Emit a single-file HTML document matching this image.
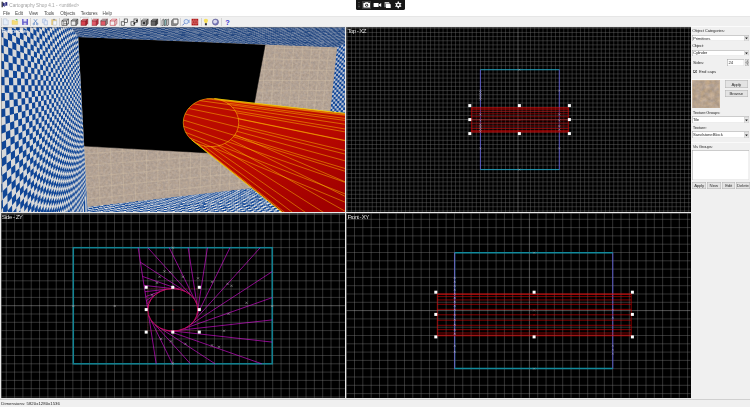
<!DOCTYPE html><html><head><meta charset="utf-8"><title>Cartography Shop 4.1 - &lt;untitled&gt;</title>
<style>
html,body{margin:0;padding:0}
body{width:750px;height:407px;overflow:hidden;background:#f0f0f0;position:relative;font-family:"Liberation Sans", sans-serif;font-size:4.3px;color:#000;line-height:1}
.a{position:absolute}
.t{position:absolute;white-space:nowrap;line-height:5px;height:5px}
.vp{position:absolute;overflow:hidden;background:#000}
.vp svg{position:absolute;left:0;top:0}
.vp:after{content:"";position:absolute;left:0;top:0;right:0;bottom:0;box-shadow:inset 0.55px 0.55px 0 0 #7a7a7a}
.lbl{position:absolute;left:1px;top:0.6px;color:#d8d8d8;font-size:4.3px;line-height:5px;white-space:nowrap}
.cb{position:absolute;background:#fff;box-shadow:inset 0.5px 0.5px 0 0 #9a9a9a,inset -0.4px -0.4px 0 0 #dcdcdc}
.cb i{position:absolute;right:0.4px;top:0.6px;bottom:0.5px;width:5.2px;background:#e6e6e6;box-shadow:inset 0 0 0 0.35px #c0c0c0}
.btn{position:absolute;background:#e3e3e3;box-shadow:inset 0 0 0 0.45px #b0b0b0;text-align:center;line-height:5px;white-space:nowrap}
.sep{position:absolute;width:0.5px;background:#d2d2d2;top:18.2px;height:7.4px}
</style></head><body>
<div class="a" style="left:0;top:0;width:750px;height:16.4px;background:#fff"></div>
<div class="a" style="left:0;top:16.4px;width:750px;height:0.6px;background:#e6e6e6"></div>
<svg class="a" style="left:1px;top:1px" width="7" height="7" viewBox="0 0 7 7"><path d="M0.6 0.8h1.2v5.4h-1.2z" fill="#222"/><path d="M1.8 0.9l1.5 1.6 1.5-1.6 1.5 0.3v3.6l-1.5-0.3-1.5 1.2-1.5-1.2z" fill="#2a2a7a"/><path d="M3.3 2.5l1.5-1.6v3.6l-1.5 1.2z" fill="#8080b8"/></svg>
<div class="a" style="left:355.8px;top:-2px;width:49px;height:11.8px;background:#161616;border-radius:1.6px"></div>
<div class="a" style="left:362px;top:0.6px;width:9.4px;height:8.4px;background:#3a3a3a"></div>
<svg class="a" style="left:355.8px;top:0" width="49" height="10" viewBox="0 0 49 10"><g fill="#fff"><rect x="2.6" y="2.2" width="0.7" height="0.7" fill="#bbb"/><rect x="2.6" y="4.6" width="0.7" height="0.7" fill="#999"/><rect x="2.4" y="6.4" width="1.2" height="0.8" fill="#999"/><path d="M7.4 3.1h1.5l0.6-0.9h2.4l0.6 0.9h1.5v4.5h-6.6z"/><circle cx="10.7" cy="5.2" r="1.45" fill="#161616"/><circle cx="10.7" cy="5.2" r="0.8"/><rect x="17.6" y="2.9" width="5" height="4.2" rx="0.5"/><path d="M22.9 4.6l2.3-1.5v3.9l-2.3-1.5z"/><path d="M28.6 2.1h4.6v1.2h-3.6v4h-1z" fill="#ccc"/><path d="M30 3.4h3.6l1.1 1.1v3.6h-4.7z"/><circle cx="42.3" cy="4.9" r="2.3"/><g stroke="#fff" stroke-width="1.3"><path d="M42.3 1.6v6.6M39.44 3.25l5.72 3.3M39.44 6.55l5.72-3.3"/></g><circle cx="42.3" cy="4.9" r="1.15" fill="#161616"/></g></svg>
<svg class="a" style="left:0;top:0" width="240" height="27" viewBox="0 0 240 27"><rect x="80.2" y="17.6" width="8.6" height="8.4" fill="#fafafa" stroke="#c4c4c4" stroke-width="0.4"/><path d="M3.3 18.9h3.2l1.7 1.7v4.3h-4.9z" fill="#e6eef9" stroke="#a4b4cc" stroke-width="0.45"/><path d="M6.5 18.9v1.7h1.7" fill="#fff" stroke="#a4b4cc" stroke-width="0.35"/><path d="M12 20.3h2.2l0.6 0.7h2.8v3.6h-5.6z" fill="#f5dc78" stroke="#d8bc58" stroke-width="0.35"/><path d="M15.3 19.4c1-0.8 2.2-0.4 2.6 0.8l-1.2 0.3z" fill="#6cbc5c"/><path d="M22.1 19h5.9v5.9h-5.9z" fill="#6660cc"/><rect x="23.5" y="19" width="3.1" height="2.5" fill="#e4e4f6"/><rect x="23.7" y="22.8" width="2.7" height="2.1" fill="#cfcfee"/><g stroke="#4a78c0" stroke-width="0.65" fill="none"><path d="M33.8 19.1l3.2 4.1M37.2 19.1l-3.2 4.1"/><circle cx="33.8" cy="24" r="0.85"/><circle cx="37.2" cy="24" r="0.85"/></g><g fill="#e4ecf8" stroke="#7c98cc" stroke-width="0.4"><path d="M42.6 19h3v3.9h-3z"/><path d="M44.2 20.7h3.2v4.2h-3.2z"/></g><path d="M51.6 19.6h4.8v5.3h-4.8z" fill="#ecd07c" stroke="#c4a45c" stroke-width="0.35"/><path d="M53.1 20.9h3.6v4.1h-3.6z" fill="#f4f6fc" stroke="#92a8cc" stroke-width="0.35"/><rect x="52.9" y="18.9" width="2.2" height="1.1" fill="#999"/><g transform="translate(61.9,19)" stroke="#222" stroke-width="0.55" stroke-linejoin="round"><path d="M0 1.8h4.8v4.6h-4.8z" fill="#f4f4f4"/><path d="M0 1.8l1.8-1.6h4.8l-1.8 1.6z" fill="#fdfdfd"/><path d="M4.8 1.8l1.8-1.6v4.6l-1.8 1.6z" fill="#e8e8e8"/></g><path d="M63.7 20.8v4.6M63.7 23.6h4.6" stroke="#222" stroke-width="0.4" fill="none"/><g transform="translate(71.2,19)" stroke="#333" stroke-width="0.55" stroke-linejoin="round"><path d="M0 1.8h4.8v4.6h-4.8z" fill="#ededed"/><path d="M0 1.8l1.8-1.6h4.8l-1.8 1.6z" fill="#cfcfcf"/><path d="M4.8 1.8l1.8-1.6v4.6l-1.8 1.6z" fill="#8c8c8c"/></g><g transform="translate(81.1,19)" stroke="#7a1820" stroke-width="0.55" stroke-linejoin="round"><path d="M0 1.8h4.8v4.6h-4.8z" fill="#d8424e"/><path d="M0 1.8l1.8-1.6h4.8l-1.8 1.6z" fill="#e8808a"/><path d="M4.8 1.8l1.8-1.6v4.6l-1.8 1.6z" fill="#a82030"/></g><g transform="translate(91.6,19)" stroke="#8a2028" stroke-width="0.55" stroke-linejoin="round"><path d="M0 1.8h4.8v4.6h-4.8z" fill="#e05a68"/><path d="M0 1.8l1.8-1.6h4.8l-1.8 1.6z" fill="#f09aa2"/><path d="M4.8 1.8l1.8-1.6v4.6l-1.8 1.6z" fill="#b83040"/></g><g transform="translate(100.8,19)" stroke="#6a3a40" stroke-width="0.55" stroke-linejoin="round"><path d="M0 1.8h4.8v4.6h-4.8z" fill="#e05a68"/><path d="M0 1.8l1.8-1.6h4.8l-1.8 1.6z" fill="#bcbcbc"/><path d="M4.8 1.8l1.8-1.6v4.6l-1.8 1.6z" fill="#8a8a8a"/></g><g transform="translate(110.2,19)" stroke="#c0303c" stroke-width="0.55" stroke-linejoin="round"><path d="M0 1.8h4.8v4.6h-4.8z" fill="#f2f2f2"/><path d="M0 1.8l1.8-1.6h4.8l-1.8 1.6z" fill="#fafafa"/><path d="M4.8 1.8l1.8-1.6v4.6l-1.8 1.6z" fill="#e0e0e0"/></g><g stroke="#222" stroke-width="0.6" fill="#f4f4f4"><rect x="121.2" y="21.8" width="3.4" height="3.4"/><rect x="124.2" y="19" width="3.4" height="3.4"/></g><g stroke="#222" stroke-width="0.6" fill="#f4f4f4"><rect x="131" y="21.8" width="3.4" height="3.4"/><rect x="134" y="19" width="3.4" height="3.4"/></g><rect x="133.4" y="22.6" width="1.8" height="1.8" fill="#222"/><rect x="135.8" y="19.8" width="1.8" height="1.8" fill="#222"/><g transform="translate(141.5,19)" stroke="#222" stroke-width="0.55" stroke-linejoin="round"><path d="M0 1.8h4.8v4.6h-4.8z" fill="#d8d8d8"/><path d="M0 1.8l1.8-1.6h4.8l-1.8 1.6z" fill="#f0f0f0"/><path d="M4.8 1.8l1.8-1.6v4.6l-1.8 1.6z" fill="#777"/></g><rect x="142.6" y="21.8" width="2.6" height="2.6" fill="#333"/><g transform="translate(151.1,19)" stroke="#222" stroke-width="0.55" stroke-linejoin="round"><path d="M0 1.8h4.8v4.6h-4.8z" fill="#666"/><path d="M0 1.8l1.8-1.6h4.8l-1.8 1.6z" fill="#999"/><path d="M4.8 1.8l1.8-1.6v4.6l-1.8 1.6z" fill="#444"/></g><g stroke="#222" stroke-width="0.5"><path d="M162 20.2l1.8-1.2v5.8l-1.8 1.2z" fill="#eee"/><path d="M164.4 20.2l1.8-1.2v5.8l-1.8 1.2z" fill="#9cc"/><path d="M166.8 20.2l1.8-1.2v5.8l-1.8 1.2z" fill="#ddd"/></g><g stroke="#333" stroke-width="0.5"><path d="M171.6 20.6l1.8-1.6h4.6v4.8l-1.8 1.6h-4.6z" fill="#999"/><path d="M173.2 19.2h4.6v4.6h-4.6z" fill="#f4f4f4"/></g><g><circle cx="186.2" cy="21.6" r="2.2" fill="#dce8f8" stroke="#6a8ccc" stroke-width="0.7"/><path d="M184.4 23.4l-2 2" stroke="#4a6cc0" stroke-width="0.9"/><path d="M188 20.2l1.6-0.8v3.6l-1.6-0.6z" fill="#8aa8dc"/></g><rect x="191.6" y="18.8" width="6.6" height="6.6" fill="#b01818"/><path d="M191.6 21h6.6M191.6 23.2h6.6M193.8 18.8v2.2M196 18.8v2.2M192.7 21v2.2M194.9 21v2.2M197.1 21v2.2M193.8 23.2v2.2M196 23.2v2.2" stroke="#f0b0b0" stroke-width="0.4"/><path d="M205.9 18.7c1.5 0 2.1 1 2.1 1.9 0 1-0.9 1.5-1 2.4h-2.2c-0.1-0.9-1-1.4-1-2.4 0-0.9 0.6-1.9 2.1-1.9z" fill="#f6de5a"/><rect x="204.9" y="23.2" width="2" height="2.1" fill="#333"/><circle cx="215.5" cy="22.1" r="3.1" fill="#7a7ab8"/><path d="M213.2 20.6c1.2-1.4 3-1 3.8 0.2s-0.4 2.2-1.6 2.6-2.6 0-2.2-2.8z" fill="#d8d8ec"/><circle cx="215.5" cy="22.1" r="3.1" fill="none" stroke="#55558a" stroke-width="0.5"/><text x="225.2" y="25" font-family='"Liberation Sans", sans-serif' font-size="7.4" font-weight="bold" fill="#3a3ad0">?</text></svg>
<div class="sep" style="left:0.6px"></div>
<div class="sep" style="left:30.2px"></div>
<div class="sep" style="left:59.2px"></div>
<div class="sep" style="left:90.7px"></div>
<div class="sep" style="left:119.1px"></div>
<div class="sep" style="left:139.7px"></div>
<div class="sep" style="left:159.8px"></div>
<div class="sep" style="left:180.3px"></div>
<div class="sep" style="left:200.6px"></div>
<div class="sep" style="left:221px"></div>
<div class="a" style="left:0;top:26.4px;width:691.4px;height:372.4px;background:#e9e9e9"></div>
<div class="vp" style="left:346.2px;top:26.9px;width:344.6px;height:185px;"><svg width="344.6" height="185" viewBox="346.2 26.9 344.6 185"><g transform="translate(346.2,26.9)"><path d="M1.28 0V185M5.44 0V185M9.6 0V185M13.77 0V185M17.93 0V185M22.1 0V185M26.26 0V185M30.42 0V185M34.59 0V185M38.75 0V185M42.92 0V185M47.08 0V185M51.24 0V185M55.41 0V185M59.57 0V185M63.74 0V185M67.9 0V185M72.06 0V185M76.23 0V185M80.39 0V185M84.56 0V185M88.72 0V185M92.88 0V185M97.05 0V185M101.21 0V185M105.38 0V185M109.54 0V185M113.7 0V185M117.87 0V185M122.03 0V185M126.2 0V185M130.36 0V185M134.52 0V185M138.69 0V185M142.85 0V185M147.02 0V185M151.18 0V185M155.34 0V185M159.51 0V185M163.67 0V185M167.84 0V185M176.16 0V185M180.33 0V185M184.49 0V185M188.66 0V185M192.82 0V185M196.98 0V185M201.15 0V185M205.31 0V185M209.48 0V185M213.64 0V185M217.8 0V185M221.97 0V185M226.13 0V185M230.3 0V185M234.46 0V185M238.62 0V185M242.79 0V185M246.95 0V185M251.12 0V185M255.28 0V185M259.44 0V185M263.61 0V185M267.77 0V185M271.94 0V185M276.1 0V185M280.26 0V185M284.43 0V185M288.59 0V185M292.76 0V185M296.92 0V185M301.08 0V185M305.25 0V185M309.41 0V185M313.58 0V185M317.74 0V185M321.9 0V185M326.07 0V185M330.23 0V185M334.4 0V185M338.56 0V185M342.72 0V185M0 1.3H344.6M0 5.45H344.6M0 9.6H344.6M0 13.75H344.6M0 17.9H344.6M0 22.05H344.6M0 26.2H344.6M0 30.35H344.6M0 34.5H344.6M0 38.65H344.6M0 42.8H344.6M0 46.95H344.6M0 51.1H344.6M0 55.25H344.6M0 59.4H344.6M0 63.55H344.6M0 67.7H344.6M0 71.85H344.6M0 76H344.6M0 80.15H344.6M0 84.3H344.6M0 88.45H344.6M0 96.75H344.6M0 100.9H344.6M0 105.05H344.6M0 109.2H344.6M0 113.35H344.6M0 117.5H344.6M0 121.65H344.6M0 125.8H344.6M0 129.95H344.6M0 134.1H344.6M0 138.25H344.6M0 142.4H344.6M0 146.55H344.6M0 150.7H344.6M0 154.85H344.6M0 159H344.6M0 163.15H344.6M0 167.3H344.6M0 171.45H344.6M0 175.6H344.6M0 179.75H344.6M0 183.9H344.6" stroke="#6c6c6c" stroke-width="0.42" fill="none"/></g><path d="M518.2 26.9V211.9M346.2 119.5H690.8" stroke="#a4a4a4" stroke-width="0.5" fill="none"/><path d="M480.6 69.6V169.5M559.5 69.6V169.5" stroke="#6464e6" stroke-width="0.8" fill="none"/><path d="M480.6 69.6H559.5M480.6 169.5H559.5" stroke="#1cb4d4" stroke-width="0.8" fill="none"/><rect x="471.6" y="107.6" width="97.2" height="24.4" fill="#380000" fill-opacity="0.25"/><path d="M471.6 107.6H568.8M471.6 108.02H568.8M471.6 109.23H568.8M471.6 111.17H568.8M471.6 113.7H568.8M471.6 116.64H568.8M471.6 119.8H568.8M471.6 122.96H568.8M471.6 125.9H568.8M471.6 128.43H568.8M471.6 130.37H568.8M471.6 131.58H568.8M471.6 132H568.8M471.6 107.6V132M568.8 107.6V132" stroke="#ee0000" stroke-width="0.5" fill="none"/><path d="M479.6 89.5l2 2M481.6 89.5l-2 2" stroke="#b8b8b8" stroke-width="0.42" fill="none"/><path d="M479.6 91.3l2 2M481.6 91.3l-2 2" stroke="#b8b8b8" stroke-width="0.42" fill="none"/><path d="M479.6 93.2l2 2M481.6 93.2l-2 2" stroke="#b8b8b8" stroke-width="0.42" fill="none"/><path d="M479.6 95l2 2M481.6 95l-2 2" stroke="#b8b8b8" stroke-width="0.42" fill="none"/><path d="M479.6 96.8l2 2M481.6 96.8l-2 2" stroke="#b8b8b8" stroke-width="0.42" fill="none"/><path d="M479.6 98.4l2 2M481.6 98.4l-2 2" stroke="#b8b8b8" stroke-width="0.42" fill="none"/><path d="M479.6 113.3l2 2M481.6 113.3l-2 2" stroke="#b8b8b8" stroke-width="0.42" fill="none"/><path d="M479.6 119.2l2 2M481.6 119.2l-2 2" stroke="#b8b8b8" stroke-width="0.42" fill="none"/><path d="M479.6 123.2l2 2M481.6 123.2l-2 2" stroke="#b8b8b8" stroke-width="0.42" fill="none"/><path d="M479.6 125l2 2M481.6 125l-2 2" stroke="#b8b8b8" stroke-width="0.42" fill="none"/><path d="M479.6 126.8l2 2M481.6 126.8l-2 2" stroke="#b8b8b8" stroke-width="0.42" fill="none"/><path d="M479.6 128.6l2 2M481.6 128.6l-2 2" stroke="#b8b8b8" stroke-width="0.42" fill="none"/><path d="M479.6 130.4l2 2M481.6 130.4l-2 2" stroke="#b8b8b8" stroke-width="0.42" fill="none"/><path d="M479.6 147.3l2 2M481.6 147.3l-2 2" stroke="#b8b8b8" stroke-width="0.42" fill="none"/><path d="M558.5 89.5l2 2M560.5 89.5l-2 2" stroke="#b8b8b8" stroke-width="0.42" fill="none"/><path d="M558.5 113.3l2 2M560.5 113.3l-2 2" stroke="#b8b8b8" stroke-width="0.42" fill="none"/><path d="M558.5 119.2l2 2M560.5 119.2l-2 2" stroke="#b8b8b8" stroke-width="0.42" fill="none"/><path d="M558.5 125l2 2M560.5 125l-2 2" stroke="#b8b8b8" stroke-width="0.42" fill="none"/><path d="M558.5 128.6l2 2M560.5 128.6l-2 2" stroke="#b8b8b8" stroke-width="0.42" fill="none"/><path d="M558.5 147.3l2 2M560.5 147.3l-2 2" stroke="#b8b8b8" stroke-width="0.42" fill="none"/><path d="M518.6 68.6l2 2M520.6 68.6l-2 2" stroke="#b8b8b8" stroke-width="0.42" fill="none"/><path d="M518.6 168.5l2 2M520.6 168.5l-2 2" stroke="#b8b8b8" stroke-width="0.42" fill="none"/><path d="M518.6 118.8l2 2M520.6 118.8l-2 2" stroke="#d02020" stroke-width="0.42" fill="none"/><rect x="468.5" y="104" width="3" height="3" fill="#fff"/><rect x="468.5" y="118" width="3" height="3" fill="#fff"/><rect x="468.5" y="132" width="3" height="3" fill="#fff"/><rect x="518.1" y="104" width="3" height="3" fill="#fff"/><rect x="518.1" y="132" width="3" height="3" fill="#fff"/><rect x="568.1" y="104" width="3" height="3" fill="#fff"/><rect x="568.1" y="118" width="3" height="3" fill="#fff"/><rect x="568.1" y="132" width="3" height="3" fill="#fff"/></svg></div>
<div class="vp" style="left:346.2px;top:213.2px;width:344.6px;height:184.8px;"><svg width="344.6" height="184.8" viewBox="346.2 213.2 344.6 184.8"><g transform="translate(346.2,213.2)"><path d="M0.18 0V184.8M8.51 0V184.8M16.84 0V184.8M25.17 0V184.8M33.5 0V184.8M41.82 0V184.8M50.15 0V184.8M58.48 0V184.8M66.81 0V184.8M75.14 0V184.8M83.46 0V184.8M91.79 0V184.8M100.12 0V184.8M108.45 0V184.8M116.78 0V184.8M125.1 0V184.8M133.43 0V184.8M141.76 0V184.8M150.09 0V184.8M158.42 0V184.8M166.74 0V184.8M175.07 0V184.8M191.73 0V184.8M200.06 0V184.8M208.38 0V184.8M216.71 0V184.8M225.04 0V184.8M233.37 0V184.8M241.7 0V184.8M250.02 0V184.8M258.35 0V184.8M266.68 0V184.8M275.01 0V184.8M283.34 0V184.8M291.66 0V184.8M299.99 0V184.8M308.32 0V184.8M316.65 0V184.8M324.98 0V184.8M333.3 0V184.8M341.63 0V184.8M0 6.3H344.6M0 14.6H344.6M0 22.9H344.6M0 31.2H344.6M0 39.5H344.6M0 47.8H344.6M0 56.1H344.6M0 64.4H344.6M0 72.7H344.6M0 81H344.6M0 89.3H344.6M0 105.9H344.6M0 114.2H344.6M0 122.5H344.6M0 130.8H344.6M0 139.1H344.6M0 147.4H344.6M0 155.7H344.6M0 164H344.6M0 172.3H344.6M0 180.6H344.6" stroke="#787878" stroke-width="0.42" fill="none"/></g><path d="M529.6 213.2V398M346.2 310.8H690.8" stroke="#a4a4a4" stroke-width="0.5" fill="none"/><path d="M454.9 252.9V368.8M613 252.9V368.8" stroke="#6262dc" stroke-width="0.9" fill="none"/><path d="M454.9 252.9V368.8" stroke="#128a9c" stroke-width="1.0" fill="none"/><path d="M454.7 252.9V368.8" stroke="#c040d0" stroke-width="0.45" fill="none"/><path d="M454.9 252.9H613M454.9 368.8H613" stroke="#128a9c" stroke-width="1.5" fill="none"/><path d="M437.5 294H631.4M437.5 294.72H631.4M437.5 296.81H631.4M437.5 300.15H631.4M437.5 304.5H631.4M437.5 309.56H631.4M437.5 315H631.4M437.5 320.44H631.4M437.5 325.5H631.4M437.5 329.85H631.4M437.5 333.19H631.4M437.5 335.28H631.4M437.5 336H631.4M437.5 294V336M631.4 294V336" stroke="#ee0000" stroke-width="0.55" fill="none"/><path d="M454 277.1l1.8 1.8M455.8 277.1l-1.8 1.8" stroke="#d0c8e8" stroke-width="0.42" fill="none"/><path d="M454 281.1l1.8 1.8M455.8 281.1l-1.8 1.8" stroke="#d0c8e8" stroke-width="0.42" fill="none"/><path d="M454 285.1l1.8 1.8M455.8 285.1l-1.8 1.8" stroke="#d0c8e8" stroke-width="0.42" fill="none"/><path d="M454 289.1l1.8 1.8M455.8 289.1l-1.8 1.8" stroke="#d0c8e8" stroke-width="0.42" fill="none"/><path d="M454 293.1l1.8 1.8M455.8 293.1l-1.8 1.8" stroke="#d0c8e8" stroke-width="0.42" fill="none"/><path d="M454 297.1l1.8 1.8M455.8 297.1l-1.8 1.8" stroke="#d0c8e8" stroke-width="0.42" fill="none"/><path d="M454 301.1l1.8 1.8M455.8 301.1l-1.8 1.8" stroke="#d0c8e8" stroke-width="0.42" fill="none"/><path d="M454 305.1l1.8 1.8M455.8 305.1l-1.8 1.8" stroke="#d0c8e8" stroke-width="0.42" fill="none"/><path d="M454 309.1l1.8 1.8M455.8 309.1l-1.8 1.8" stroke="#d0c8e8" stroke-width="0.42" fill="none"/><path d="M454 314.1l1.8 1.8M455.8 314.1l-1.8 1.8" stroke="#d0c8e8" stroke-width="0.42" fill="none"/><path d="M454 319.1l1.8 1.8M455.8 319.1l-1.8 1.8" stroke="#d0c8e8" stroke-width="0.42" fill="none"/><path d="M454 324.1l1.8 1.8M455.8 324.1l-1.8 1.8" stroke="#d0c8e8" stroke-width="0.42" fill="none"/><path d="M454 329.1l1.8 1.8M455.8 329.1l-1.8 1.8" stroke="#d0c8e8" stroke-width="0.42" fill="none"/><path d="M454 333.1l1.8 1.8M455.8 333.1l-1.8 1.8" stroke="#d0c8e8" stroke-width="0.42" fill="none"/><path d="M454 345.1l1.8 1.8M455.8 345.1l-1.8 1.8" stroke="#d0c8e8" stroke-width="0.42" fill="none"/><path d="M454 351.1l1.8 1.8M455.8 351.1l-1.8 1.8" stroke="#d0c8e8" stroke-width="0.42" fill="none"/><path d="M612.2 309.2l1.6 1.6M613.8 309.2l-1.6 1.6" stroke="#a8a0c8" stroke-width="0.42" fill="none"/><path d="M612.2 317.2l1.6 1.6M613.8 317.2l-1.6 1.6" stroke="#a8a0c8" stroke-width="0.42" fill="none"/><path d="M612.2 345.2l1.6 1.6M613.8 345.2l-1.6 1.6" stroke="#a8a0c8" stroke-width="0.42" fill="none"/><path d="M612.2 349.2l1.6 1.6M613.8 349.2l-1.6 1.6" stroke="#a8a0c8" stroke-width="0.42" fill="none"/><path d="M612.2 353.2l1.6 1.6M613.8 353.2l-1.6 1.6" stroke="#a8a0c8" stroke-width="0.42" fill="none"/><path d="M533.3 251.9l2 2M535.3 251.9l-2 2" stroke="#b8b8b8" stroke-width="0.42" fill="none"/><path d="M533.3 367.8l2 2M535.3 367.8l-2 2" stroke="#b8b8b8" stroke-width="0.42" fill="none"/><path d="M533.3 314l2 2M535.3 314l-2 2" stroke="#d02020" stroke-width="0.42" fill="none"/><path d="M533.3 309.6l2 2M535.3 309.6l-2 2" stroke="#888" stroke-width="0.42" fill="none"/><rect x="434.5" y="290.9" width="3" height="3" fill="#fff"/><rect x="434.5" y="313.1" width="3" height="3" fill="#fff"/><rect x="434.5" y="335.6" width="3" height="3" fill="#fff"/><rect x="532.8" y="290.9" width="3" height="3" fill="#fff"/><rect x="532.8" y="335.6" width="3" height="3" fill="#fff"/><rect x="631.1" y="290.9" width="3" height="3" fill="#fff"/><rect x="631.1" y="313.1" width="3" height="3" fill="#fff"/><rect x="631.1" y="335.6" width="3" height="3" fill="#fff"/></svg></div>
<div class="vp" style="left:1px;top:213.2px;width:343.9px;height:184.8px;"><svg width="343.9" height="184.8" viewBox="1 213.2 343.9 184.8"><g transform="translate(1,213.2)"><path d="M5.24 0V184.8M13.57 0V184.8M21.9 0V184.8M30.22 0V184.8M38.55 0V184.8M46.88 0V184.8M55.21 0V184.8M63.54 0V184.8M71.86 0V184.8M80.19 0V184.8M88.52 0V184.8M96.85 0V184.8M105.18 0V184.8M113.5 0V184.8M121.83 0V184.8M130.16 0V184.8M138.49 0V184.8M146.82 0V184.8M155.14 0V184.8M163.47 0V184.8M180.13 0V184.8M188.46 0V184.8M196.78 0V184.8M205.11 0V184.8M213.44 0V184.8M221.77 0V184.8M230.1 0V184.8M238.42 0V184.8M246.75 0V184.8M255.08 0V184.8M263.41 0V184.8M271.74 0V184.8M280.06 0V184.8M288.39 0V184.8M296.72 0V184.8M305.05 0V184.8M313.38 0V184.8M321.7 0V184.8M330.03 0V184.8M338.36 0V184.8M0 1.4H343.9M0 9.7H343.9M0 18H343.9M0 26.3H343.9M0 34.6H343.9M0 42.9H343.9M0 51.2H343.9M0 59.5H343.9M0 67.8H343.9M0 76.1H343.9M0 84.4H343.9M0 101H343.9M0 109.3H343.9M0 117.6H343.9M0 125.9H343.9M0 134.2H343.9M0 142.5H343.9M0 150.8H343.9M0 159.1H343.9M0 167.4H343.9M0 175.7H343.9M0 184H343.9" stroke="#787878" stroke-width="0.42" fill="none"/></g><path d="M172.8 213.2V398M1 305.9H344.9" stroke="#a4a4a4" stroke-width="0.5" fill="none"/><rect x="73.3" y="247.9" width="198.9" height="116.1" fill="none" stroke="#128494" stroke-width="1.5"/><path d="M138.16 247.9L156.18 364M148.65 315.49L172.35 364M151.15 320.6L190.42 364M155.12 324.99L215.07 364M160.3 328.36L261.77 364M166.33 330.48L272.2 342.3M172.8 331.2L272.2 320.1M179.27 330.48L272.2 297.84M185.3 328.36L272.2 271.81M190.48 324.99L260.23 247.9M194.45 320.6L229.96 247.9M196.95 315.49L207.44 247.9M197.8 310L188.16 247.9M196.95 304.51L169.29 247.9M194.45 299.4L147.85 247.9M190.48 295.01L140.42 262.43M185.3 291.64L142.62 276.65M179.27 289.52L144.01 285.59M172.8 288.8L144.99 291.9M166.33 289.52L145.74 296.75M160.3 291.64L146.36 300.71M155.12 295.01L146.89 304.11M151.15 299.4L147.36 307.16M148.65 304.51L147.8 310" stroke="#f010f0" stroke-width="0.58" fill="none"/><path d="M147.8 310L148.65 315.49L151.15 320.6L155.12 324.99L160.3 328.36L166.33 330.48L172.8 331.2L179.27 330.48L185.3 328.36L190.48 324.99L194.45 320.6L196.95 315.49L197.8 310L196.95 304.51L194.45 299.4L190.48 295.01L185.3 291.64L179.27 289.52L172.8 288.8L166.33 289.52L160.3 291.64L155.12 295.01L151.15 299.4L148.65 304.51Z" stroke="#e01010" stroke-width="0.5" fill="none"/><rect x="147.8" y="288.8" width="50" height="42.4" fill="none" stroke="#a01010" stroke-width="0.4" stroke-dasharray="0.8 0.8"/><path d="M172.1 309.3l1.4 1.4M173.5 309.3l-1.4 1.4" stroke="#d02020" stroke-width="0.42" fill="none"/><path d="M72.2 305.1l2.2 2.2M74.4 305.1l-2.2 2.2" stroke="#b8b8b8" stroke-width="0.5" fill="none"/><path d="M113.6 305.1l2.2 2.2M115.8 305.1l-2.2 2.2" stroke="#b8b8b8" stroke-width="0.5" fill="none"/><path d="M271.1 305.1l2.2 2.2M273.3 305.1l-2.2 2.2" stroke="#b8b8b8" stroke-width="0.5" fill="none"/><path d="M171.7 246.8l2.2 2.2M173.9 246.8l-2.2 2.2" stroke="#b8b8b8" stroke-width="0.5" fill="none"/><path d="M171.7 362.5l2.2 2.2M173.9 362.5l-2.2 2.2" stroke="#b8b8b8" stroke-width="0.5" fill="none"/><path d="M163.4 270.4l2.2 2.2M165.6 270.4l-2.2 2.2" stroke="#b8b8b8" stroke-width="0.5" fill="none"/><path d="M169.2 271.4l2.2 2.2M171.4 271.4l-2.2 2.2" stroke="#b8b8b8" stroke-width="0.5" fill="none"/><path d="M158.4 275.9l2.2 2.2M160.6 275.9l-2.2 2.2" stroke="#b8b8b8" stroke-width="0.5" fill="none"/><path d="M181.9 275.9l2.2 2.2M184.1 275.9l-2.2 2.2" stroke="#b8b8b8" stroke-width="0.5" fill="none"/><path d="M196.9 277.4l2.2 2.2M199.1 277.4l-2.2 2.2" stroke="#b8b8b8" stroke-width="0.5" fill="none"/><path d="M226.4 282.9l2.2 2.2M228.6 282.9l-2.2 2.2" stroke="#b8b8b8" stroke-width="0.5" fill="none"/><path d="M230.4 284.9l2.2 2.2M232.6 284.9l-2.2 2.2" stroke="#b8b8b8" stroke-width="0.5" fill="none"/><path d="M155.9 281.9l2.2 2.2M158.1 281.9l-2.2 2.2" stroke="#b8b8b8" stroke-width="0.5" fill="none"/><path d="M150.9 293.9l2.2 2.2M153.1 293.9l-2.2 2.2" stroke="#b8b8b8" stroke-width="0.5" fill="none"/><path d="M210.9 280.9l2.2 2.2M213.1 280.9l-2.2 2.2" stroke="#b8b8b8" stroke-width="0.5" fill="none"/><path d="M245.4 301.9l2.2 2.2M247.6 301.9l-2.2 2.2" stroke="#b8b8b8" stroke-width="0.5" fill="none"/><path d="M227.4 312.9l2.2 2.2M229.6 312.9l-2.2 2.2" stroke="#b8b8b8" stroke-width="0.5" fill="none"/><path d="M222.9 329.9l2.2 2.2M225.1 329.9l-2.2 2.2" stroke="#b8b8b8" stroke-width="0.5" fill="none"/><path d="M210.9 344.4l2.2 2.2M213.1 344.4l-2.2 2.2" stroke="#b8b8b8" stroke-width="0.5" fill="none"/><path d="M217.9 345.9l2.2 2.2M220.1 345.9l-2.2 2.2" stroke="#b8b8b8" stroke-width="0.5" fill="none"/><path d="M184.4 342.9l2.2 2.2M186.6 342.9l-2.2 2.2" stroke="#b8b8b8" stroke-width="0.5" fill="none"/><path d="M169.9 340.4l2.2 2.2M172.1 340.4l-2.2 2.2" stroke="#b8b8b8" stroke-width="0.5" fill="none"/><path d="M159.9 337.9l2.2 2.2M162.1 337.9l-2.2 2.2" stroke="#b8b8b8" stroke-width="0.5" fill="none"/><rect x="144.7" y="286" width="3" height="3" fill="#fff"/><rect x="144.7" y="308.3" width="3" height="3" fill="#fff"/><rect x="144.7" y="330.8" width="3" height="3" fill="#fff"/><rect x="171.3" y="286" width="3" height="3" fill="#fff"/><rect x="171.3" y="330.8" width="3" height="3" fill="#fff"/><rect x="197.8" y="286" width="3" height="3" fill="#fff"/><rect x="197.8" y="308.3" width="3" height="3" fill="#fff"/><rect x="197.8" y="330.8" width="3" height="3" fill="#fff"/></svg></div>
<div class="vp" style="left:1px;top:26.9px;width:343.9px;height:185px;background:#3a6ab0"><svg width="343.9" height="185" viewBox="0 0 343.9 185"><defs><linearGradient id="cg" gradientUnits="userSpaceOnUse" x1="240" y1="75" x2="300" y2="190"><stop offset="0" stop-color="#c81200"/><stop offset="0.5" stop-color="#b80800"/><stop offset="1" stop-color="#a00000"/></linearGradient><filter id="tn" x="0" y="0" width="100%" height="100%" color-interpolation-filters="sRGB"><feTurbulence type="fractalNoise" baseFrequency="0.4" numOctaves="2" seed="7"/><feColorMatrix values="0.15 0 0 0 0.625  0.13 0 0.03 0 0.555  0.1 0 0.07 0 0.495  0 0 0 0 1"/></filter></defs><path d="M86.2 179.8L321.9 152.7L397.03 175.12L48.52 227.02Z" fill="#e2e2e2"/><path d="M89.51 179.42L92.8 179.04L59.36 225.41L53.96 226.21ZM96.07 178.67L99.32 178.29L70.02 223.82L64.72 224.61ZM102.56 177.92L105.78 177.55L80.5 222.26L75.28 223.03ZM108.98 177.18L112.17 176.81L90.8 220.72L85.67 221.49ZM115.33 176.45L118.49 176.09L100.94 219.21L95.89 219.97ZM121.62 175.73L124.74 175.37L110.9 217.73L105.94 218.47ZM127.84 175.01L130.93 174.66L120.71 216.27L115.82 217ZM134 174.3L137.05 173.95L130.35 214.83L125.55 215.55ZM140.09 173.6L143.12 173.26L139.84 213.42L135.11 214.12ZM146.12 172.91L149.11 172.57L149.18 212.03L144.53 212.72ZM152.09 172.22L155.05 171.88L158.37 210.66L153.79 211.34ZM158 171.54L160.93 171.21L167.42 209.31L162.91 209.99ZM163.85 170.87L166.75 170.54L176.32 207.99L171.89 208.65ZM169.64 170.21L172.51 169.88L185.09 206.68L180.72 207.33ZM175.37 169.55L178.21 169.22L193.72 205.4L189.42 206.04ZM181.04 168.9L183.86 168.57L202.23 204.13L197.99 204.76ZM186.66 168.25L189.45 167.93L210.6 202.88L206.43 203.5ZM192.22 167.61L194.98 167.29L218.85 201.66L214.74 202.27ZM197.73 166.98L200.46 166.66L226.98 200.45L222.93 201.05ZM203.18 166.35L205.89 166.04L234.98 199.25L230.99 199.85ZM208.58 165.73L211.26 165.42L242.87 198.08L238.94 198.66ZM213.93 165.11L216.58 164.81L250.65 196.92L246.77 197.5ZM219.22 164.51L221.85 164.2L258.31 195.78L254.49 196.35ZM224.47 163.9L227.07 163.6L265.86 194.65L262.1 195.21ZM229.67 163.3L232.24 163.01L273.31 193.55L269.6 194.1ZM234.81 162.71L237.37 162.42L280.65 192.45L276.99 193ZM239.91 162.13L242.44 161.84L287.88 191.38L284.28 191.91ZM244.96 161.55L247.46 161.26L295.02 190.31L291.46 190.84ZM249.96 160.97L252.44 160.69L302.06 189.26L298.55 189.79ZM254.92 160.4L257.38 160.12L309 188.23L305.54 188.75ZM259.82 159.84L262.26 159.56L315.84 187.21L312.43 187.72ZM264.69 159.28L267.1 159L322.6 186.21L319.23 186.71ZM269.51 158.72L271.9 158.45L329.26 185.21L325.94 185.71ZM274.28 158.17L276.65 157.9L335.83 184.23L332.56 184.72ZM279.01 157.63L281.36 157.36L342.32 183.27L339.09 183.75ZM283.7 157.09L286.03 156.82L348.72 182.32L345.53 182.79ZM288.35 156.56L290.66 156.29L355.03 181.38L351.89 181.84ZM292.95 156.03L295.24 155.77L361.27 180.45L358.16 180.91ZM297.52 155.5L299.78 155.24L367.42 179.53L364.35 179.99ZM302.04 154.98L304.28 154.73L373.49 178.63L370.47 179.08ZM306.52 154.47L308.75 154.21L379.49 177.73L376.5 178.18ZM310.96 153.96L313.17 153.7L385.41 176.85L382.46 177.29ZM315.37 153.45L317.55 153.2L391.26 175.98L388.34 176.42ZM319.73 152.95L321.9 152.7L397.03 175.12L394.15 175.55ZM85.5 180.68L323.45 153.16L325.04 153.64L84.78 181.58ZM84.05 182.49L326.65 154.12L328.29 154.61L83.3 183.43ZM82.53 184.39L329.96 155.11L331.66 155.61L81.75 185.38ZM80.95 186.38L333.4 156.13L335.17 156.66L80.12 187.42ZM79.28 188.47L336.97 157.2L338.81 157.75L78.41 189.56ZM77.53 190.67L340.68 158.31L342.6 158.88L76.62 191.81ZM75.69 192.97L344.55 159.46L346.54 160.05L74.73 194.17ZM73.75 195.4L348.57 160.66L350.64 161.28L72.74 196.66ZM71.71 197.96L352.76 161.91L354.92 162.56L70.64 199.29ZM69.55 200.66L357.13 163.21L359.39 163.89L68.43 202.07ZM67.27 203.52L361.69 164.58L364.05 165.28L66.08 205.01ZM64.85 206.55L366.46 166L368.92 166.73L63.59 208.13ZM62.29 209.76L371.44 167.49L374.02 168.26L60.95 211.44ZM59.57 213.18L376.66 169.04L379.36 169.85L58.14 214.96ZM56.67 216.81L382.13 170.68L384.97 171.52L55.15 218.72ZM53.57 220.69L387.87 172.39L390.85 173.28L51.95 222.73ZM50.26 224.84L393.9 174.19L397.03 175.12L48.52 227.02Z" fill="#0f4596" fill-rule="evenodd"/><path d="M335.9 20.2L373.28 4.02L356.48 163.02L321.9 152.7Z" fill="#b4bdd0"/><path d="M338 19.29L340.15 18.36L325.83 153.87L323.84 153.28ZM342.34 17.41L344.59 16.44L329.94 155.1L327.86 154.48ZM346.89 15.44L349.25 14.42L334.25 156.39L332.07 155.74ZM351.66 13.38L354.13 12.31L338.77 157.73L336.48 157.05ZM356.67 11.21L359.26 10.09L343.51 159.15L341.11 158.43ZM361.92 8.94L364.65 7.75L348.5 160.64L345.97 159.88ZM367.45 6.54L370.33 5.3L353.75 162.21L351.09 161.41ZM335.66 22.48L372.99 6.76L372.7 9.5L335.42 24.77ZM335.18 27.05L372.41 12.24L372.12 14.99L334.93 29.34ZM334.69 31.62L371.83 17.73L371.54 20.47L334.45 33.91ZM334.21 36.19L371.25 23.21L370.96 25.95L333.97 38.48ZM333.73 40.76L370.67 28.69L370.38 31.43L333.49 43.04ZM333.24 45.33L370.09 34.18L369.8 36.92L333 47.61ZM332.76 49.9L369.51 39.66L369.22 42.4L332.52 52.18ZM332.28 54.47L368.94 45.14L368.65 47.88L332.04 56.75ZM331.8 59.04L368.36 50.62L368.07 53.36L331.56 61.32ZM331.31 63.61L367.78 56.11L367.49 58.85L331.07 65.89ZM330.83 68.17L367.2 61.59L366.91 64.33L330.59 70.46ZM330.35 72.74L366.62 67.07L366.33 69.81L330.11 75.03ZM329.87 77.31L366.04 72.55L365.75 75.3L329.62 79.6ZM329.38 81.88L365.46 78.04L365.17 80.78L329.14 84.17ZM328.9 86.45L364.88 83.52L364.59 86.26L328.66 88.73ZM328.42 91.02L364.3 89L364.01 91.74L328.18 93.3ZM327.93 95.59L363.72 94.49L363.43 97.23L327.69 97.87ZM327.45 100.16L363.14 99.97L362.85 102.71L327.21 102.44ZM326.97 104.73L362.56 105.45L362.27 108.19L326.73 107.01ZM326.49 109.29L361.98 110.93L361.69 113.68L326.24 111.58ZM326 113.86L361.4 116.42L361.11 119.16L325.76 116.15ZM325.52 118.43L360.82 121.9L360.54 124.64L325.28 120.72ZM325.04 123L360.25 127.38L359.96 130.12L324.8 125.29ZM324.56 127.57L359.67 132.86L359.38 135.61L324.31 129.86ZM324.07 132.14L359.09 138.35L358.8 141.09L323.83 134.42ZM323.59 136.71L358.51 143.83L358.22 146.57L323.35 138.99ZM323.11 141.28L357.93 149.31L357.64 152.05L322.87 143.56ZM322.62 145.85L357.35 154.8L357.06 157.54L322.38 148.13ZM322.14 150.42L356.77 160.28L356.48 163.02L321.9 152.7Z" fill="#0f4596" fill-rule="evenodd"/><path d="M77.2 9.9L335.9 20.2L321.9 152.7L86.2 179.8Z" fill="#a8917d"/><clipPath id="tc"><path d="M77.2 9.9L335.9 20.2L321.9 152.7L86.2 179.8Z"/></clipPath><rect x="70" y="0" width="275" height="185" filter="url(#tn)" clip-path="url(#tc)"/><path d="M77.9 9.93L86.83 179.73M91.79 10.48L99.18 178.31M105.32 11.02L111.27 176.92M118.53 11.55L123.08 175.56M131.41 12.06L134.64 174.23M143.99 12.56L145.95 172.93M156.27 13.05L157.01 171.66M168.26 13.53L167.85 170.41M179.97 13.99L178.45 169.19M191.42 14.45L188.84 168M202.61 14.89L199.01 166.83M213.54 15.33L208.98 165.68M224.24 15.75L218.74 164.56M234.7 16.17L228.32 163.46M244.94 16.58L237.7 162.38M254.96 16.98L246.9 161.32M264.76 17.37L255.92 160.29M274.36 17.75L264.77 159.27M283.76 18.12L273.46 158.27M292.97 18.49L281.98 157.29M301.99 18.85L290.34 156.33M310.83 19.2L298.55 155.39M319.49 19.55L306.6 154.46M327.99 19.88L314.52 153.55M77.41 13.95L335.57 23.29M78.12 27.32L334.5 33.48M78.82 40.46L333.43 43.56M79.5 53.4L332.38 53.5M80.18 66.13L331.34 63.33M80.84 78.65L330.32 73.03M81.5 90.98L329.3 82.62M82.14 103.12L328.3 92.09M82.77 115.07L327.32 101.45M83.39 126.83L326.34 110.69M84.01 138.42L325.37 119.83M84.61 149.83L324.42 128.85M85.21 161.07L323.48 137.77M85.79 172.15L322.55 146.59" stroke="#cfbea4" stroke-width="0.7" fill="none" opacity="0.65"/><path d="M77.2 9.9L264.1 18L243.8 127.9L83.3 119.1Z" fill="#000" stroke="#000" stroke-width="0.5"/><path d="M55.66 -17.46L376.09 2.8L335.9 20.2L77.2 9.9Z" fill="#8090ac"/><path d="M60.72 -17.14L65.73 -16.82L84.81 10.2L81.02 10.05ZM70.7 -16.51L75.62 -16.2L92.32 10.5L88.58 10.35ZM80.5 -15.89L85.34 -15.58L99.73 10.8L96.04 10.65ZM90.14 -15.28L94.89 -14.98L107.04 11.09L103.4 10.94ZM99.61 -14.68L104.28 -14.39L114.25 11.38L110.66 11.23ZM108.91 -14.09L113.51 -13.8L121.37 11.66L117.82 11.52ZM118.06 -13.51L122.58 -13.23L128.39 11.94L124.89 11.8ZM127.05 -12.94L131.49 -12.66L135.32 12.21L131.87 12.08ZM135.9 -12.39L140.26 -12.11L142.16 12.49L138.75 12.35ZM144.6 -11.84L148.89 -11.56L148.91 12.76L145.55 12.62ZM153.15 -11.29L157.38 -11.03L155.58 13.02L152.26 12.89ZM161.57 -10.76L165.72 -10.5L162.16 13.28L158.88 13.15ZM169.85 -10.24L173.94 -9.98L168.66 13.54L165.42 13.41ZM177.99 -9.72L182.02 -9.47L175.07 13.8L171.87 13.67ZM186.01 -9.22L189.97 -8.97L181.4 14.05L178.25 13.92ZM193.9 -8.72L197.8 -8.47L187.66 14.3L184.54 14.17ZM201.67 -8.23L205.51 -7.98L193.84 14.54L190.76 14.42ZM209.32 -7.74L213.09 -7.5L199.94 14.79L196.9 14.67ZM216.85 -7.27L220.57 -7.03L205.97 15.03L202.96 14.91ZM224.26 -6.8L227.92 -6.57L211.92 15.26L208.95 15.15ZM231.56 -6.34L235.17 -6.11L217.8 15.5L214.87 15.38ZM238.75 -5.88L242.31 -5.66L223.62 15.73L220.72 15.61ZM245.84 -5.43L249.34 -5.21L229.36 15.96L226.5 15.84ZM252.82 -4.99L256.27 -4.77L235.03 16.18L232.21 16.07ZM259.69 -4.56L263.09 -4.34L240.64 16.41L237.85 16.3ZM266.47 -4.13L269.82 -3.92L246.18 16.63L243.42 16.52ZM273.15 -3.71L276.45 -3.5L251.66 16.85L248.93 16.74ZM279.73 -3.29L282.98 -3.08L257.08 17.06L254.38 16.95ZM286.22 -2.88L289.42 -2.68L262.43 17.27L259.76 17.17ZM292.61 -2.47L295.77 -2.27L267.72 17.49L265.08 17.38ZM298.92 -2.08L302.03 -1.88L272.95 17.69L270.34 17.59ZM305.13 -1.68L308.21 -1.49L278.12 17.9L275.54 17.8ZM311.26 -1.3L314.3 -1.1L283.23 18.1L280.68 18ZM317.31 -0.91L320.3 -0.72L288.29 18.3L285.77 18.2ZM323.27 -0.54L326.22 -0.35L293.29 18.5L290.8 18.4ZM329.15 -0.16L332.06 0.02L298.23 18.7L295.77 18.6ZM334.95 0.2L337.83 0.38L303.12 18.89L300.68 18.8ZM340.68 0.57L343.51 0.74L307.96 19.09L305.55 18.99ZM346.33 0.92L349.12 1.1L312.74 19.28L310.36 19.18ZM351.9 1.27L354.66 1.45L317.47 19.47L315.11 19.37ZM357.4 1.62L360.12 1.79L322.15 19.65L319.82 19.56ZM362.83 1.97L365.51 2.14L326.79 19.84L324.48 19.75ZM368.18 2.3L370.83 2.47L331.37 20.02L329.08 19.93ZM373.47 2.64L376.09 2.8L335.9 20.2L333.64 20.11ZM56.72 -16.11L374.23 3.61L372.39 4.4L57.77 -14.79ZM58.78 -13.49L370.59 5.18L368.82 5.95L59.78 -12.23ZM60.75 -10.99L367.07 6.71L365.35 7.45L61.7 -9.78ZM62.64 -8.6L363.66 8.18L362 8.9L63.55 -7.44ZM64.44 -6.31L360.36 9.61L358.74 10.31L65.32 -5.2ZM66.17 -4.11L357.15 11L355.59 11.68L67.01 -3.04ZM67.83 -2L354.04 12.35L352.52 13L68.64 -0.97ZM69.43 0.03L351.03 13.65L349.55 14.29L70.21 1.02ZM70.97 1.98L348.1 14.92L346.66 15.54L71.71 2.93ZM72.44 3.86L345.25 16.15L343.86 16.76L73.16 4.77ZM73.87 5.66L342.48 17.35L341.13 17.94L74.56 6.54ZM75.24 7.41L339.8 18.51L338.48 19.08L75.9 8.25ZM76.56 9.08L337.18 19.65L335.9 20.2L77.2 9.9Z" fill="#214680" fill-rule="evenodd"/><clipPath id="wc"><path d="M0 0L69.9 0.1L77.2 9.9L86.6 185L0 185Z"/></clipPath><g clip-path="url(#wc)"><rect x="0" y="0" width="90" height="185" fill="#d9d9d9"/><path d="M-19.33 -46.9L-12.83 213.1L-7.31 213.1L-13.81 -46.9ZM-8.59 -46.9L-2.09 213.1L2.85 213.1L-3.65 -46.9ZM1.02 -46.9L7.52 213.1L11.95 213.1L5.45 -46.9ZM9.67 -46.9L16.17 213.1L20.17 213.1L13.67 -46.9ZM17.49 -46.9L23.99 213.1L27.62 213.1L21.12 -46.9ZM24.59 -46.9L31.09 213.1L34.41 213.1L27.91 -46.9ZM31.08 -46.9L37.58 213.1L40.62 213.1L34.12 -46.9ZM37.03 -46.9L43.53 213.1L46.32 213.1L39.82 -46.9ZM42.5 -46.9L49 213.1L51.57 213.1L45.07 -46.9ZM47.55 -46.9L54.05 213.1L56.43 213.1L49.93 -46.9ZM52.22 -46.9L58.72 213.1L60.93 213.1L54.43 -46.9ZM56.56 -46.9L63.06 213.1L65.11 213.1L58.61 -46.9ZM60.6 -46.9L67.1 213.1L69.02 213.1L62.52 -46.9ZM64.37 -46.9L70.87 213.1L72.66 213.1L66.16 -46.9ZM67.89 -46.9L74.39 213.1L76.07 213.1L69.57 -46.9ZM71.2 -46.9L77.7 213.1L79.28 213.1L72.78 -46.9ZM74.3 -46.9L80.8 213.1L82.29 213.1L75.79 -46.9ZM77.23 -46.9L83.73 213.1L85.12 213.1L78.62 -46.9ZM79.98 -46.9L86.48 213.1L87.8 213.1L81.3 -46.9ZM82.58 -46.9L89.08 213.1L90.33 213.1L83.83 -46.9ZM85.04 -46.9L91.54 213.1L92.72 213.1L86.22 -46.9ZM-12.92 -223.67L90.95 11.17L90.99 12.62L-12.71 -215.14ZM-12.49 -206.61L91.02 14.06L91.06 15.51L-12.28 -198.08ZM-12.07 -189.55L91.1 16.96L91.13 18.4L-11.85 -181.01ZM-11.64 -172.48L91.17 19.85L91.2 21.29L-11.43 -163.95ZM-11.21 -155.42L91.24 22.74L91.28 24.19L-11 -146.89ZM-10.79 -138.36L91.31 25.63L91.35 27.08L-10.57 -129.83ZM-10.36 -121.29L91.39 28.52L91.42 29.97L-10.15 -112.76ZM-9.93 -104.23L91.46 31.42L91.49 32.86L-9.72 -95.7ZM-9.51 -87.17L91.53 34.31L91.57 35.75L-9.29 -78.64ZM-9.08 -70.1L91.6 37.2L91.64 38.65L-8.87 -61.57ZM-8.65 -53.04L91.67 40.09L91.71 41.54L-8.44 -44.51ZM-8.23 -35.98L91.75 42.98L91.78 44.43L-8.01 -27.45ZM-7.8 -18.92L91.82 45.88L91.86 47.32L-7.59 -10.38ZM-7.37 -1.85L91.89 48.77L91.93 50.22L-7.16 6.68ZM-6.95 15.21L91.96 51.66L92 53.11L-6.73 23.74ZM-6.52 32.27L92.04 54.55L92.07 56L-6.31 40.8ZM-6.09 49.34L92.11 57.45L92.14 58.89L-5.88 57.87ZM-5.67 66.4L92.18 60.34L92.22 61.78L-5.45 74.93ZM-5.24 83.46L92.25 63.23L92.29 64.68L-5.03 91.99ZM-4.81 100.53L92.33 66.12L92.36 67.57L-4.6 109.06ZM-4.39 117.59L92.4 69.01L92.43 70.46L-4.17 126.12ZM-3.96 134.65L92.47 71.91L92.51 73.35L-3.75 143.18ZM-3.53 151.71L92.54 74.8L92.58 76.24L-3.32 160.25ZM-3.11 168.78L92.61 77.69L92.65 79.14L-2.89 177.31ZM-2.68 185.84L92.69 80.58L92.72 82.03L-2.47 194.37ZM-2.25 202.9L92.76 83.47L92.8 84.92L-2.04 211.43ZM-1.83 219.97L92.83 86.37L92.87 87.81L-1.62 228.5ZM-1.4 237.03L92.9 89.26L92.94 90.7L-1.19 245.56ZM-0.98 254.09L92.98 92.15L93.01 93.6L-0.76 262.62ZM-0.55 271.16L93.05 95.04L93.08 96.49L-0.34 279.69ZM-0.12 288.22L93.12 97.93L93.16 99.38L0.09 296.75ZM0.3 305.28L93.19 100.83L93.23 102.27L0.52 313.81ZM0.73 322.34L93.27 103.72L93.3 105.16L0.94 330.88ZM1.16 339.41L93.34 106.61L93.37 108.06L1.37 347.94ZM1.58 356.47L93.41 109.5L93.45 110.95L1.8 365ZM2.01 373.53L93.48 112.39L93.52 113.84L2.22 382.06ZM2.44 390.6L93.55 115.29L93.59 116.73L2.65 399.13ZM2.86 407.66L93.63 118.18L93.66 119.62L3.08 416.19ZM3.29 424.72L93.7 121.07L93.74 122.52L3.5 433.25ZM3.72 441.79L93.77 123.96L93.81 125.41L3.93 450.32ZM4.14 458.85L93.84 126.85L93.88 128.3L4.36 467.38ZM4.57 475.91L93.92 129.75L93.95 131.19L4.78 484.44Z" fill="#0f4596" fill-rule="evenodd"/></g><path d="M213.58 71.7L346 86.67L346 187.1L283.58 187.1L191.22 113.34L191.22 113.34L189.51 111.85L187.96 110.24L186.57 108.51L185.36 106.69L184.34 104.78L183.52 102.81L182.9 100.78L182.48 98.7L182.27 96.61L182.28 94.51L182.49 92.41L182.92 90.34L183.55 88.31L184.38 86.34L185.41 84.44L186.62 82.62L188.01 80.9L189.57 79.29L191.29 77.8L193.14 76.45L195.13 75.25L197.23 74.2L199.42 73.32L201.7 72.6L204.04 72.06L206.43 71.7L208.84 71.52L211.26 71.52Z" fill="url(#cg)"/><ellipse cx="210" cy="95.6" rx="27.75" ry="24.1" fill="#a00000" fill-opacity="0.3"/><path d="M237.6 98.12L346 124M235.91 104.24L346 134.36M232.45 109.77L346 144.84M188.43 110.77L346 175.93M184.65 105.4L346 167.61M182.59 99.37L346 155.97M182.4 93.08L346 142.11M184.09 86.96L346 127.55M187.55 81.43L346 113.84M192.54 76.87L346 102.29M198.71 73.58L346 93.74M205.66 71.8L346 88.55M212.9 71.63L346 86.68M219.94 73.1L346 87.85M226.31 76.1L346 91.63M231.57 80.43L346 97.57M235.35 85.8L346 105.21M237.41 91.83L346 114.15M234.03 107.65L346 155.61M229.62 112.64L346 170.24M223.88 116.47L346 185.27M217.18 118.88L325.24 187.1M210 119.7L306.93 187.1M202.82 118.88L293.79 187.1M196.12 116.47L285.84 187.1M190.38 112.64L283.67 187.1" stroke="#ffc000" stroke-width="0.5" fill="none"/><ellipse cx="210" cy="95.6" rx="27.75" ry="24.1" fill="none" stroke="#ffc000" stroke-width="0.55"/><path d="M213.58 71.7L346 86.67M191.22 113.34L283.58 187.1" stroke="#f4e000" stroke-width="0.65" fill="none"/></svg></div>
<div class="a" style="left:691.4px;top:26.2px;width:58.6px;height:0.6px;background:#fbfbfb"></div>
<div class="cb" style="left:692px;top:35.2px;width:57.2px;height:6.1px"><i></i></div><svg class="a" style="left:744.2px;top:37.15px" width="5" height="3"><path d="M1.1 0.45h2.8l-1.4 1.8z" fill="#1a1a1a"/></svg>
<div class="cb" style="left:692px;top:49.7px;width:57.2px;height:6.3px"><i></i></div><svg class="a" style="left:744.2px;top:51.75px" width="5" height="3"><path d="M1.1 0.45h2.8l-1.4 1.8z" fill="#1a1a1a"/></svg>
<div class="cb" style="left:727.3px;top:58.9px;width:17.2px;height:7px"></div>
<div class="a" style="left:744.6px;top:58.9px;width:4.6px;height:7px;background:#e8e8e8;box-shadow:inset 0 0 0 0.4px #b0b0b0"></div>
<div class="a" style="left:744.6px;top:62.2px;width:4.6px;height:0.4px;background:#b0b0b0"></div>
<svg class="a" style="left:744.6px;top:58.9px" width="4.6" height="7"><path d="M1.3 2.4l1-1.1 1 1.1zM1.3 4.6l1 1.1 1-1.1z" fill="#444"/></svg>
<div class="a" style="left:693.2px;top:69.8px;width:3.6px;height:3.6px;background:#fff;box-shadow:inset 0 0 0 0.45px #555"></div>
<svg class="a" style="left:693.2px;top:69.8px" width="3.6" height="3.6"><path d="M0.8 1.7l0.8 0.9 1.3-1.7" stroke="#111" stroke-width="0.6" fill="none"/></svg>
<div class="a" style="left:691.4px;top:78.5px;width:58.6px;height:0.5px;background:#fafafa"></div>
<svg class="a" style="left:692.3px;top:80.1px" width="28" height="28.4" viewBox="0 0 28 28.4"><defs><filter id="nz" x="0" y="0" width="100%" height="100%" color-interpolation-filters="sRGB"><feTurbulence type="fractalNoise" baseFrequency="0.22" numOctaves="3" seed="4"/><feColorMatrix values="0.2 0 0.03 0 0.6  0.15 0 0.07 0 0.525  0.07 0 0.16 0 0.44  0 0 0 0 1"/></filter></defs><rect width="28" height="28.4" fill="#b39c86"/><rect width="28" height="28.4" filter="url(#nz)"/><rect x="0.3" y="0.3" width="27.4" height="27.8" fill="none" stroke="#d4c0a6" stroke-width="0.6" opacity="0.8"/></svg>
<div class="btn" style="left:724.8px;top:80.1px;width:23px;height:8.4px"></div>
<div class="btn" style="left:724.8px;top:89.6px;width:23px;height:7.8px"></div>
<div class="cb" style="left:692px;top:116.4px;width:57.2px;height:6.8px"><i></i></div><svg class="a" style="left:744.2px;top:118.7px" width="5" height="3"><path d="M1.1 0.45h2.8l-1.4 1.8z" fill="#1a1a1a"/></svg>
<div class="cb" style="left:692px;top:131.1px;width:57.2px;height:7px"><i></i></div><svg class="a" style="left:744.2px;top:133.5px" width="5" height="3"><path d="M1.1 0.45h2.8l-1.4 1.8z" fill="#1a1a1a"/></svg>
<div class="a" style="left:691.4px;top:141.5px;width:58.6px;height:0.5px;background:#fafafa"></div>
<div class="cb" style="left:692px;top:149.5px;width:57.4px;height:30px"></div>
<div class="btn" style="left:692.3px;top:181.7px;width:13.5px;height:7.8px"></div>
<div class="btn" style="left:706.7px;top:181.7px;width:14.2px;height:7.8px"></div>
<div class="btn" style="left:721.8px;top:181.7px;width:13.5px;height:7.8px"></div>
<div class="btn" style="left:736.2px;top:181.7px;width:13.4px;height:7.8px"></div>
<div class="a" style="left:0;top:399.4px;width:750px;height:0.5px;background:#d0d0d0"></div>
<div class="a" style="left:0;top:0;width:750px;height:407px;will-change:transform"><div class="t" style="left:9.3px;top:2.5px;font-size:4.65px;color:#a2a2a2;">Cartography Shop 4.1 - &lt;untitled&gt;</div><div class="t" style="left:3px;top:10.5px;font-size:4.65px;color:#4c4c4c;letter-spacing:-0.173px;">File</div><div class="t" style="left:15.1px;top:10.5px;font-size:4.65px;color:#4c4c4c;letter-spacing:-0.053px;">Edit</div><div class="t" style="left:28.8px;top:10.5px;font-size:4.65px;color:#4c4c4c;letter-spacing:-0.224px;">View</div><div class="t" style="left:44.3px;top:10.5px;font-size:4.65px;color:#4c4c4c;letter-spacing:-0.251px;">Tools</div><div class="t" style="left:60.3px;top:10.5px;font-size:4.65px;color:#4c4c4c;letter-spacing:-0.123px;">Objects</div><div class="t" style="left:80.8px;top:10.5px;font-size:4.65px;color:#4c4c4c;letter-spacing:-0.109px;">Textures</div><div class="t" style="left:102.6px;top:10.5px;font-size:4.65px;color:#4c4c4c;letter-spacing:0.009px;">Help</div><div class="t" style="left:347.4px;top:27.9px;font-size:6.2px;color:#dedede;letter-spacing:-0.604px;">Top - XZ</div><div class="t" style="left:347.4px;top:213.9px;font-size:6.2px;color:#dedede;letter-spacing:-0.685px;">Front - XY</div><div class="t" style="left:1.7px;top:213.9px;font-size:6.2px;color:#dedede;letter-spacing:-0.560px;">Side - ZY</div><div class="t" style="left:1.6px;top:27.9px;font-size:6.2px;color:#f4f4f4;letter-spacing:-0.654px;">Perspective</div><div class="t" style="left:692.3px;top:28.4px;font-size:4.3px;color:#303030;letter-spacing:-0.173px;">Object Categories:</div><div class="t" style="left:693px;top:35.55px;font-size:4.3px;color:#303030;letter-spacing:-0.143px;">Primitives</div><div class="t" style="left:692.3px;top:42.9px;font-size:4.3px;color:#303030;letter-spacing:-0.375px;">Object:</div><div class="t" style="left:693px;top:50.15px;font-size:4.3px;color:#303030;letter-spacing:-0.209px;">Cylinder</div><div class="t" style="left:692.9px;top:59.6px;font-size:4.3px;color:#303030;letter-spacing:-0.142px;">Sides:</div><div class="t" style="left:728.4px;top:59.7px;font-size:4.3px;color:#303030;letter-spacing:-0.142px;">24</div><div class="t" style="left:699px;top:69.2px;font-size:4.3px;color:#303030;letter-spacing:-0.116px;">End caps</div><div class="t" style="left:731.6px;top:81.6px;font-size:4.3px;color:#303030;letter-spacing:-0.271px;">Apply</div><div class="t" style="left:729.55px;top:90.8px;font-size:4.3px;color:#303030;letter-spacing:-0.140px;">Browse</div><div class="t" style="left:692.7px;top:110.3px;font-size:4.3px;color:#303030;letter-spacing:-0.206px;">Texture Groups:</div><div class="t" style="left:693px;top:117.1px;font-size:4.3px;color:#303030;letter-spacing:-0.217px;">Tile</div><div class="t" style="left:692.7px;top:124.9px;font-size:4.3px;color:#303030;letter-spacing:-0.199px;">Texture:</div><div class="t" style="left:693px;top:131.9px;font-size:4.3px;color:#303030;letter-spacing:-0.098px;">SandstoneBlock</div><div class="t" style="left:692.7px;top:143.7px;font-size:4.3px;color:#303030;letter-spacing:-0.226px;">Vis Groups:</div><div class="t" style="left:694.15px;top:182.9px;font-size:4.3px;color:#303030;letter-spacing:-0.191px;">Apply</div><div class="t" style="left:709.6px;top:182.9px;font-size:4.3px;color:#303030;letter-spacing:-0.067px;">New</div><div class="t" style="left:725.15px;top:182.9px;font-size:4.3px;color:#303030;letter-spacing:-0.152px;">Edit</div><div class="t" style="left:737.05px;top:182.9px;font-size:4.3px;color:#303030;letter-spacing:-0.122px;">Delete</div><div class="t" style="left:1.3px;top:401.2px;font-size:4.3px;color:#222;letter-spacing:0.033px;">Dimensions: 5820x1280x1536</div></div>
</body></html>
